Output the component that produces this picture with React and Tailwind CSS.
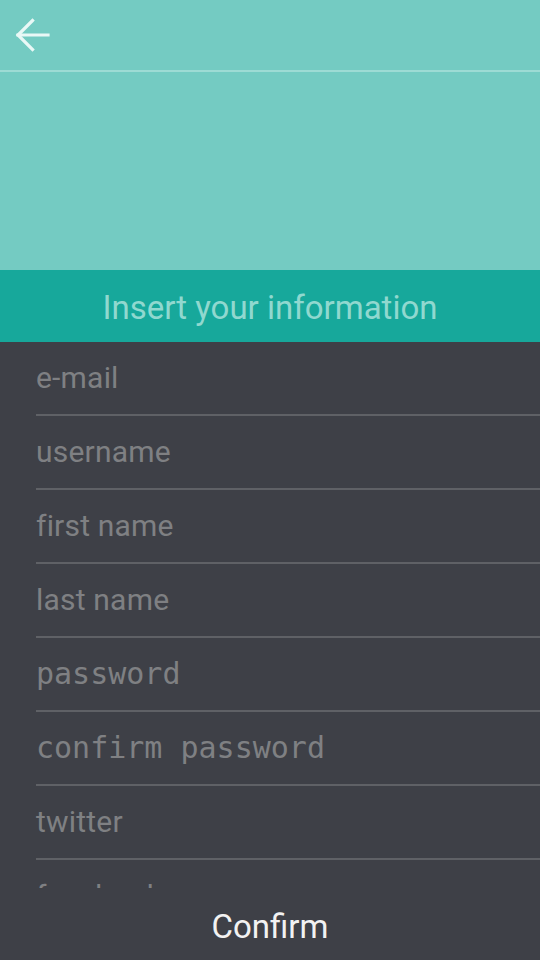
import React from "react";

const fields = [
  { label: "e-mail" },
  { label: "username" },
  { label: "first name" },
  { label: "last name" },
  { label: "password", mono: true },
  { label: "confirm password", mono: true },
  { label: "twitter" },
  { label: "facebook" },
];

function BackArrow() {
  return (
    <svg width="36" height="36" viewBox="0 0 36 36" fill="none" stroke="#e9f8f6" strokeWidth="3.2" strokeLinecap="square">
      <path d="M3 18H33" />
      <path d="M17.5 3.5L3 18L17.5 32.5" />
    </svg>
  );
}

export default function App() {
  return (
    <div className="w-[540px] h-[960px] flex flex-col bg-[#3e4047] overflow-hidden" style={{ fontFamily: "Roboto, 'Liberation Sans', sans-serif" }}>
      <div className="h-[270px] bg-[#74cbc2] flex flex-col">
        <div className="h-[70px] flex items-center pl-[15px]">
          <BackArrow />
        </div>
        <div className="h-[2px] bg-[#9ddbd4]" />
      </div>
      <div className="h-[72px] bg-[#17a89b] flex items-center justify-center pt-[4px]">
        <span className="text-[33px] text-[#90d8cf]">Insert your information</span>
      </div>
      <div className="h-[546px] overflow-hidden">
        {fields.map((f) => (
          <div key={f.label} className="ml-[36px] h-[74px] border-b-2 border-[#5f6166] flex items-center">
            <span
              className="text-[30px] text-[#7f8083] leading-none"
              style={f.mono ? { fontFamily: "'DejaVu Sans Mono', 'Liberation Mono', monospace" } : { letterSpacing: "0.2px" }}
            >
              {f.label}
            </span>
          </div>
        ))}
      </div>
      <div className="flex-1 flex items-center justify-center pt-[6px]">
        <span className="text-[33px] text-[#f2f2f2]">Confirm</span>
      </div>
    </div>
  );
}
